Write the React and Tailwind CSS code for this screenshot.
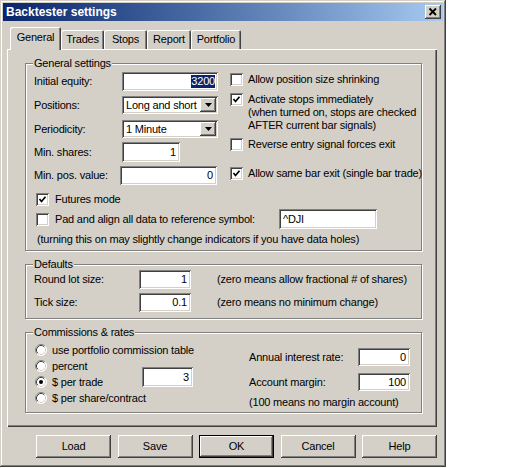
import React from 'react';

const sunken = 'bg-white shadow-[inset_1px_1px_0_#808080,inset_-1px_-1px_0_#fff,inset_2px_2px_0_#404040,inset_-2px_-2px_0_#d4d0c8]';
const raised = 'bg-[#d4d0c8] shadow-[inset_-1px_-1px_0_#404040,inset_1px_1px_0_#fff,inset_-2px_-2px_0_#808080,inset_2px_2px_0_#d4d0c8]';

function Field({ className = '', children }) {
  return (
    <div className={`${sunken} ${className} flex items-center justify-end pr-[4px] overflow-hidden shrink-0`}>
      {children}
    </div>
  );
}

function Select({ value, className = '' }) {
  return (
    <div className={`${sunken} ${className} flex items-center shrink-0 p-[2px]`}>
      <span className="flex-1 pl-[2px]">{value}</span>
      <div className={`${raised} w-[16px] h-full flex items-center justify-center`}>
        <svg width="7" height="4" viewBox="0 0 7 4">
          <polygon points="0,0 7,0 3.5,4" fill="#000" />
        </svg>
      </div>
    </div>
  );
}

function Check({ checked }) {
  return (
    <div className={`${sunken} relative w-[13px] h-[13px] shrink-0`}>
      {checked && (
        <svg className="absolute inset-0" width="13" height="13" viewBox="0 0 13 13">
          <path d="M3.5 6 L5.5 8.5 L9.5 3.8" stroke="#000" strokeWidth="1.7" fill="none" />
        </svg>
      )}
    </div>
  );
}

function Radio({ checked }) {
  return (
    <svg width="12" height="12" viewBox="0 0 12 12" className="shrink-0">
      <circle cx="6" cy="6" r="5.5" fill="#fff" />
      <path d="M2.11 9.89 A5.5 5.5 0 0 1 9.89 2.11" stroke="#808080" fill="none" />
      <path d="M2.82 9.18 A4.5 4.5 0 0 1 9.18 2.82" stroke="#404040" fill="none" />
      <path d="M9.89 2.11 A5.5 5.5 0 0 1 2.11 9.89" stroke="#fff" fill="none" />
      <path d="M9.18 2.82 A4.5 4.5 0 0 1 2.82 9.18" stroke="#d4d0c8" fill="none" />
      {checked && <circle cx="6" cy="6" r="2" fill="#000" />}
    </svg>
  );
}

function Group({ label, className = '', children }) {
  return (
    <div className={`relative border border-[#808080] shadow-[1px_1px_0_#fff,inset_1px_1px_0_#fff] ${className}`}>
      <span className="absolute -top-[8px] left-[7px] px-[1px] bg-[#d4d0c8] leading-[14px]">{label}</span>
      {children}
    </div>
  );
}

function Button({ label, isDefault }) {
  return (
    <div className={`w-[75px] h-[23px] ${isDefault ? 'border border-black' : ''} ${raised} flex items-center justify-center`}>
      {label}
    </div>
  );
}

export default function App() {
  const tabs = [
    { name: 'Trades', w: 'w-[43px]' },
    { name: 'Stops', w: 'w-[43px]' },
    { name: 'Report', w: 'w-[44px]' },
    { name: 'Portfolio', w: 'w-[50px]' },
  ];

  return (
    <div className="w-[512px] h-[468px] bg-white font-['Liberation_Sans',Arial,sans-serif] text-[11px] tracking-[-0.2px] text-black leading-[13px]">
      <div className="w-[446px] h-[467px] bg-[#d4d0c8] p-[3px] flex flex-col shadow-[inset_-1px_-1px_0_#404040,inset_1px_1px_0_#d4d0c8,inset_-2px_-2px_0_#808080,inset_2px_2px_0_#fff]">
        {/* title bar */}
        <div className="h-[18px] flex items-center justify-between pl-[3px] pr-[2px] bg-linear-to-r from-[#0a246a] to-[#a6caf0]">
          <span className="font-bold text-[12px] tracking-normal text-white">Backtester settings</span>
          <div className={`${raised} w-[16px] h-[14px] flex items-center justify-center`}>
            <svg width="16" height="14" viewBox="0 0 16 14">
              <path d="M4.5 3.5 L11 10 M11 3.5 L4.5 10" stroke="#000" strokeWidth="1.8" fill="none" />
            </svg>
          </div>
        </div>

        <div className="pl-[4px] pt-[6px] flex flex-col">
          {/* tabs */}
          <div className="h-[22px] flex items-end pl-[3px]">
            <div className="relative z-10 w-[51px] h-[23px] -mb-[1px] bg-[#d4d0c8] rounded-t-[2px] shadow-[inset_1px_1px_0_#fff,inset_-1px_0_0_#404040,inset_-2px_0_0_#808080] flex items-start justify-center pt-[4px]">
              General
            </div>
            {tabs.map((t) => (
              <div key={t.name} className={`${t.w} h-[19px] bg-[#d4d0c8] rounded-t-[2px] shadow-[inset_1px_1px_0_#fff,inset_-1px_0_0_#404040,inset_-2px_0_0_#808080] flex items-center justify-center`}>
                {t.name}
              </div>
            ))}
          </div>

          {/* panel */}
          <div className="w-[430px] h-[378px] pl-[18px] pt-[14px] flex flex-col shadow-[inset_1px_1px_0_#fff,inset_-1px_-1px_0_#404040,inset_-2px_-2px_0_#808080]">
            <Group label="General settings" className="w-[397px] h-[188px] pt-[8px] pl-[8px]">
              <div className="flex">
                <div className="w-[184px] flex flex-col">
                  <div className="flex items-center h-[19px]">
                    <span className="w-[88px]">Initial equity:</span>
                    <Field className="w-[96px] h-[19px] pr-[2px]">
                      <span className="bg-[#0a246a] text-white -mr-[1px]">3200</span>
                    </Field>
                  </div>
                  <div className="flex items-center h-[18px] mt-[5px]">
                    <span className="w-[88px]">Positions:</span>
                    <Select value="Long and short" className="w-[96px] h-[18px]" />
                  </div>
                  <div className="flex items-center h-[18px] mt-[6px]">
                    <span className="w-[88px]">Periodicity:</span>
                    <Select value="1 Minute" className="w-[96px] h-[18px]" />
                  </div>
                  <div className="flex items-center h-[20px] mt-[4px]">
                    <span className="w-[88px]">Min. shares:</span>
                    <Field className="w-[58px] h-[20px]">1</Field>
                  </div>
                  <div className="flex items-center h-[19px] mt-[4px]">
                    <span className="w-[86px]">Min. pos. value:</span>
                    <Field className="w-[97px] h-[19px]">0</Field>
                  </div>
                </div>

                <div className="ml-[12px] flex flex-col whitespace-nowrap">
                  <div className="flex items-center mt-[1px] h-[13px]">
                    <Check />
                    <span className="ml-[5px]">Allow position size shrinking</span>
                  </div>
                  <div className="flex items-start mt-[7px]">
                    <Check checked />
                    <span className="ml-[5px]">
                      Activate stops immediately
                      <br />
                      (when turned on, stops are checked
                      <br />
                      AFTER current bar signals)
                    </span>
                  </div>
                  <div className="flex items-center mt-[6px] h-[13px]">
                    <Check />
                    <span className="ml-[5px]">Reverse entry signal forces exit</span>
                  </div>
                  <div className="flex items-center mt-[16px] h-[13px]">
                    <Check checked />
                    <span className="ml-[5px]">Allow same bar exit (single bar trade)</span>
                  </div>
                </div>
              </div>

              <div className="flex items-center h-[13px] mt-[8px] pl-[2px]">
                <Check checked />
                <span className="ml-[6px]">Futures mode</span>
              </div>
              <div className="flex items-center h-[20px] mt-[3px] pl-[2px]">
                <Check />
                <span className="ml-[6px] w-[224px]">Pad and align all data to reference symbol:</span>
                <Field className="w-[98px] h-[20px] justify-start pl-[4px]">^DJI</Field>
              </div>
              <div className="mt-[4px] pl-[3px]">
                (turning this on may slightly change indicators if you have data holes)
              </div>
            </Group>

            <Group label="Defaults" className="w-[397px] h-[55px] mt-[13px] pt-[5px] pl-[8px]">
              <div className="flex items-center h-[19px]">
                <span className="w-[105px]">Round lot size:</span>
                <Field className="w-[52px] h-[19px]">1</Field>
                <span className="ml-[26px]">(zero means allow fractional # of shares)</span>
              </div>
              <div className="flex items-center h-[19px] mt-[4px]">
                <span className="w-[105px]">Tick size:</span>
                <Field className="w-[52px] h-[19px]">0.1</Field>
                <span className="ml-[26px]">(zero means no minimum change)</span>
              </div>
            </Group>

            <Group label="Commissions & rates" className="w-[397px] h-[81px] mt-[13px] pt-[9px] pl-[9px] flex">
              <div className="w-[107px] flex flex-col">
                {[
                  ['use portfolio commission table', false],
                  ['percent', false],
                  ['$ per trade', true],
                  ['$ per share/contract', false],
                ].map(([t, c]) => (
                  <div key={t} className="flex items-center h-[16px] whitespace-nowrap">
                    <Radio checked={c} />
                    <span className="ml-[5px]">{t}</span>
                  </div>
                ))}
              </div>
              <div className="pt-[25px]">
                <Field className="w-[51px] h-[20px]">3</Field>
              </div>
              <div className="ml-[56px] pt-[6px] flex flex-col">
                <div className="flex items-center h-[18px]">
                  <span className="w-[109px]">Annual interest rate:</span>
                  <Field className="w-[52px] h-[18px]">0</Field>
                </div>
                <div className="flex items-center h-[18px] mt-[7px]">
                  <span className="w-[109px]">Account margin:</span>
                  <Field className="w-[52px] h-[18px]">100</Field>
                </div>
                <div className="mt-[5px]">(100 means no margin account)</div>
              </div>
            </Group>
          </div>
        </div>

        {/* buttons */}
        <div className="flex gap-[6.5px] pl-[33px] mt-[8px]">
          <Button label="Load" />
          <Button label="Save" />
          <Button label="OK" isDefault />
          <Button label="Cancel" />
          <Button label="Help" />
        </div>
      </div>
    </div>
  );
}
